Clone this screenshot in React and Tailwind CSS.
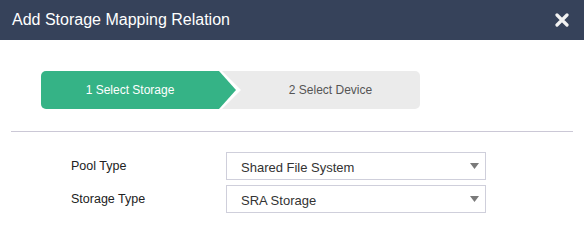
import React from "react";

const font = { fontFamily: '"Liberation Sans", Arial, sans-serif' };

const SelectBox = ({ value }) => (
    <div className="flex items-center justify-between w-[260px] h-[28px] border border-[#cfcfdb] bg-white pl-[14px] pr-[6px]">
        <span className="pt-[3px] text-[13px] text-[#333]">{value}</span>
        <svg width="9" height="6" viewBox="0 0 9 6">
            <polygon points="0,0 9,0 4.5,6" fill="#7a7a7a" />
        </svg>
    </div>
);

const App = () => {
    return (
        <div className="w-[584px] h-[249px] bg-white" style={font}>
            <div className="flex items-center justify-between h-10 bg-[#36425a] pl-3 pr-[15px]">
                <h1 className="text-[16px] text-white">Add Storage Mapping Relation</h1>
                <svg width="14" height="14" viewBox="0 0 14 14">
                    <path d="M2 2 L12 12 M12 2 L2 12" stroke="#f2f2f2" strokeWidth="3.2" strokeLinecap="round" />
                </svg>
            </div>

            <div className="pl-[41px] pt-[31px]">
                <div className="flex w-[379px] h-[38px] rounded-[5px] bg-[#ebebeb] overflow-hidden">
                    <div className="relative w-[200px] shrink-0">
                        <div
                            className="absolute inset-0 bg-white"
                            style={{ clipPath: "polygon(0 0, 181px 0, 200px 50%, 181px 100%, 0 100%)" }}
                        />
                        <div
                            className="absolute inset-0 bg-[#35b386]"
                            style={{ clipPath: "polygon(0 0, 178px 0, 195px 50%, 178px 100%, 0 100%)" }}
                        />
                        <div className="relative flex items-center justify-center w-[178px] h-full text-[12px] text-white">
                            1 Select Storage
                        </div>
                    </div>
                    <div className="flex flex-1 items-center justify-center text-[12px] text-[#555]">
                        2 Select Device
                    </div>
                </div>
            </div>

            <div className="mx-[11px] mt-[22px] h-px bg-[#cbc8d6]" />

            <div className="flex flex-col gap-[5px] pt-[20px] pl-[71px]">
                <div className="flex items-center">
                    <span className="w-[155px] pt-[1px] text-[12.5px] text-[#222]">Pool Type</span>
                    <SelectBox value="Shared File System" />
                </div>
                <div className="flex items-center">
                    <span className="w-[155px] pt-[1px] text-[12.5px] text-[#222]">Storage Type</span>
                    <SelectBox value="SRA Storage" />
                </div>
            </div>
        </div>
    );
};

export default App;
